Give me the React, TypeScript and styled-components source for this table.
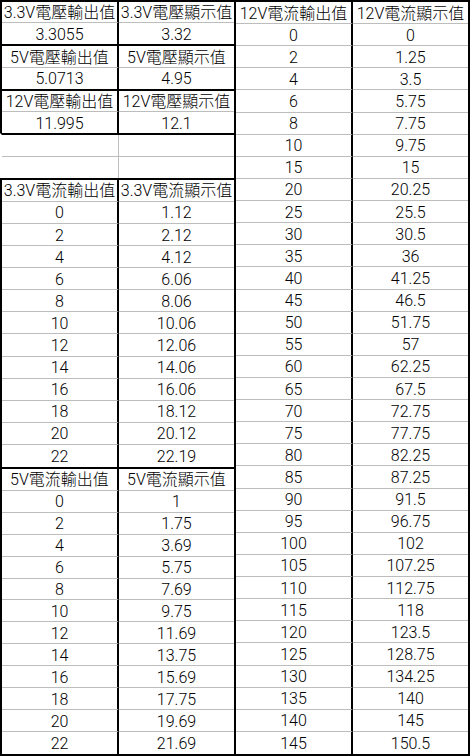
import React from 'react';
import styled, { createGlobalStyle } from 'styled-components';

const ROW = 756 / 34;
const GRID = '#bdbdbd';
const FONT = 'Roboto, "Noto Sans CJK TC", sans-serif';

type Pair = [string, string];

interface Group {
  id: string;
  framed: boolean;
  rows: Pair[];
}

const leftGroups: Group[] = [
  { id: 'v33', framed: true, rows: [['3.3V電壓輸出值', '3.3V電壓顯示值'], ['3.3055', '3.32']] },
  { id: 'v5', framed: true, rows: [['5V電壓輸出值', '5V電壓顯示值'], ['5.0713', '4.95']] },
  { id: 'v12', framed: true, rows: [['12V電壓輸出值', '12V電壓顯示值'], ['11.995', '12.1']] },
  { id: 'blank', framed: false, rows: [['', ''], ['', '']] },
  {
    id: 'a33',
    framed: true,
    rows: [
      ['3.3V電流輸出值', '3.3V電流顯示值'],
      ['0', '1.12'],
      ['2', '2.12'],
      ['4', '4.12'],
      ['6', '6.06'],
      ['8', '8.06'],
      ['10', '10.06'],
      ['12', '12.06'],
      ['14', '14.06'],
      ['16', '16.06'],
      ['18', '18.12'],
      ['20', '20.12'],
      ['22', '22.19'],
    ],
  },
  {
    id: 'a5',
    framed: true,
    rows: [
      ['5V電流輸出值', '5V電流顯示值'],
      ['0', '1'],
      ['2', '1.75'],
      ['4', '3.69'],
      ['6', '5.75'],
      ['8', '7.69'],
      ['10', '9.75'],
      ['12', '11.69'],
      ['14', '13.75'],
      ['16', '15.69'],
      ['18', '17.75'],
      ['20', '19.69'],
      ['22', '21.69'],
    ],
  },
];

const rightGroup: Group = {
  id: 'a12',
  framed: true,
  rows: [
    ['12V電流輸出值', '12V電流顯示值'],
    ['0', '0'],
    ['2', '1.25'],
    ['4', '3.5'],
    ['6', '5.75'],
    ['8', '7.75'],
    ['10', '9.75'],
    ['15', '15'],
    ['20', '20.25'],
    ['25', '25.5'],
    ['30', '30.5'],
    ['35', '36'],
    ['40', '41.25'],
    ['45', '46.5'],
    ['50', '51.75'],
    ['55', '57'],
    ['60', '62.25'],
    ['65', '67.5'],
    ['70', '72.75'],
    ['75', '77.75'],
    ['80', '82.25'],
    ['85', '87.25'],
    ['90', '91.5'],
    ['95', '96.75'],
    ['100', '102'],
    ['105', '107.25'],
    ['110', '112.75'],
    ['115', '118'],
    ['120', '123.5'],
    ['125', '128.75'],
    ['130', '134.25'],
    ['135', '140'],
    ['140', '145'],
    ['145', '150.5'],
  ],
};

const Global = createGlobalStyle`
  * { box-sizing: border-box; }
  html, body { margin: 0; padding: 0; background: #fff; }
  body { font-family: ${FONT}; }
`;

const Sheet = styled.div`
  display: flex;
  width: 470px;
  height: 756px;
  overflow: hidden;
  background: #fff;
  color: #000;
  font-family: ${FONT};
  font-size: 16px;
  font-weight: 300;
`;

const Stack = styled.div`
  display: flex;
  flex-direction: column;
  width: 234px;
  flex: none;
`;

const Block = styled.section<{ $rows: number; $framed: boolean; $last?: boolean; $side: 'left' | 'right' }>`
  flex: none;
  width: ${(p) => (p.$side === 'right' ? 236 : 234)}px;
  height: ${(p) => p.$rows * ROW}px;
  display: grid;
  grid-template-columns: 117px 1fr;
  grid-template-rows: repeat(${(p) => p.$rows}, 1fr);
  border-top: 2px solid #000;
  border-left: 2px solid ${(p) => (p.$framed ? '#000' : 'transparent')};
  border-right: ${(p) => (p.$side === 'right' ? '2px solid #000' : 'none')};
  border-bottom: ${(p) => (p.$last ? '2px solid #000' : 'none')};
`;

const Cell = styled.div<{ $first: boolean; $lastRow: boolean; $framed: boolean }>`
  display: flex;
  align-items: center;
  justify-content: center;
  min-width: 0;
  white-space: nowrap;
  line-height: 1;
  padding-top: 2px;
  border-bottom: ${(p) => (p.$lastRow ? 'none' : `1px solid ${GRID}`)};
  border-right: ${(p) =>
    p.$first ? (p.$framed ? '2px solid #000' : `1px solid ${GRID}`) : 'none'};
`;

function GroupBlock({ group, side, last }: { group: Group; side: 'left' | 'right'; last?: boolean }) {
  const n = group.rows.length;
  return (
    <Block $rows={n} $framed={group.framed} $last={last} $side={side}>
      {group.rows.map((row, r) =>
        row.map((text, c) => (
          <Cell
            key={`${group.id}-${r}-${c}`}
            $first={c === 0}
            $lastRow={r === n - 1}
            $framed={group.framed}
          >
            {text}
          </Cell>
        ))
      )}
    </Block>
  );
}

export default function App() {
  return (
    <>
      <Global />
      <Sheet>
        <Stack>
          {leftGroups.map((g, i) => (
            <GroupBlock key={g.id} group={g} side="left" last={i === leftGroups.length - 1} />
          ))}
        </Stack>
        <GroupBlock group={rightGroup} side="right" last />
      </Sheet>
    </>
  );
}
